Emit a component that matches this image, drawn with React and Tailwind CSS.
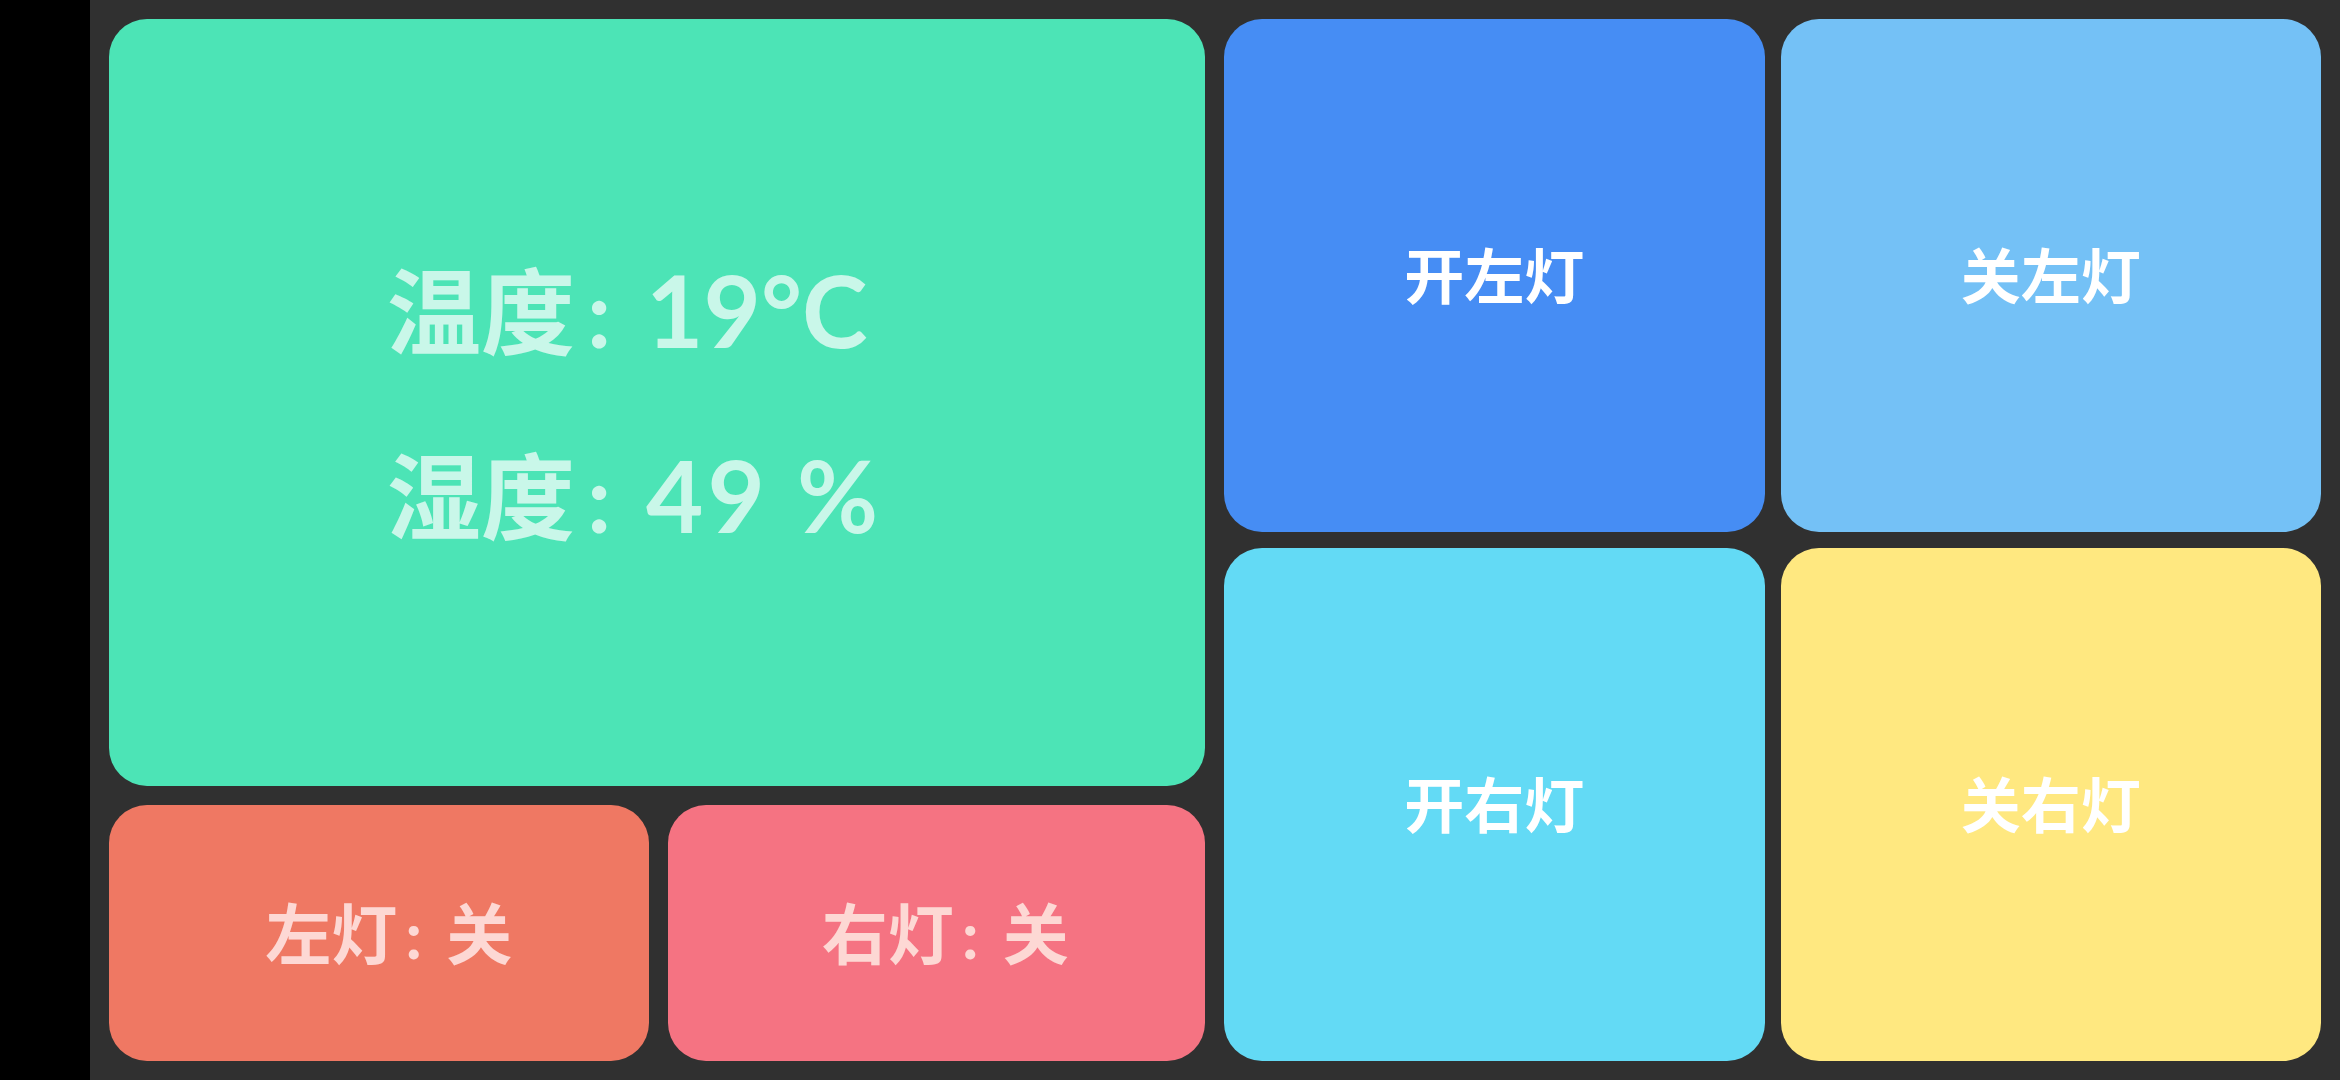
export default function App() {
  const font = { fontFamily: '"Lato", "Noto Sans CJK SC", sans-serif' };

  return (
    <div className="flex h-[1080px] w-[2340px] bg-black" style={font}>
      {/* left system strip */}
      <div className="w-[90px] shrink-0" />

      <div className="flex flex-1 gap-[19px] bg-[#303030] p-[19px]">
        {/* Left column: sensor + lamp status */}
        <div className="flex w-[1096px] flex-col gap-[19px]">
          <div className="flex flex-1 flex-col justify-center rounded-[38px] bg-[#4ce4b6] pl-[278px] text-[94px] font-bold leading-[183px] text-[#c9f7e9]">
            <div>
              温度<span className="mx-[12px]">:</span> <span className="text-[99px]">19°C</span>
            </div>
            <div>
              湿度<span className="mx-[12px]">:</span> <span className="text-[99px] tracking-[4px]">49 %</span>
            </div>
          </div>
          <div className="flex h-[256px] gap-[19px]">
            <div className="flex flex-1 items-center justify-center rounded-[38px] bg-[#ef7863] pl-[20px] text-[66px] font-bold text-[#fdd8d4]">
              <span>
                左灯<span className="mx-[8px]">:</span> 关
              </span>
            </div>
            <div className="flex flex-1 items-center justify-center rounded-[38px] bg-[#f57382] pl-[18px] text-[66px] font-bold text-[#fdd8d4]">
              <span>
                右灯<span className="mx-[8px]">:</span> 关
              </span>
            </div>
          </div>
        </div>

        {/* Right: control buttons */}
        <div className="grid flex-1 grid-cols-2 grid-rows-2 gap-[16px] text-[60px] font-bold text-white">
          <button className="flex items-center justify-center rounded-[38px] bg-[#468df4]">开左灯</button>
          <button className="flex items-center justify-center rounded-[38px] bg-[#74c1f6]">关左灯</button>
          <button className="flex items-center justify-center rounded-[38px] bg-[#63daf5]">开右灯</button>
          <button className="flex items-center justify-center rounded-[38px] bg-[#ffe880]">关右灯</button>
        </div>
      </div>
    </div>
  );
}
